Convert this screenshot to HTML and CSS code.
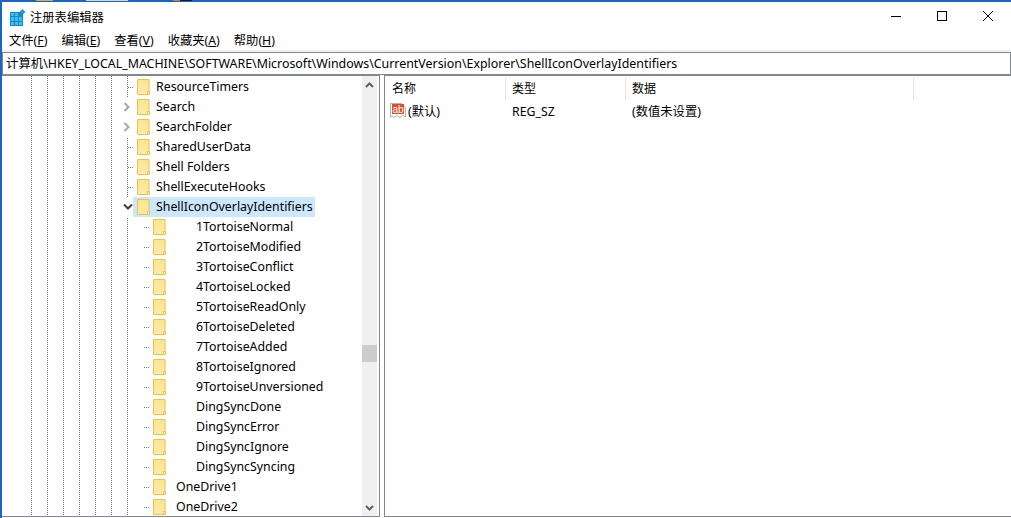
FILE: index.html
```html
<!DOCTYPE html>
<html lang="zh-CN">
<head>
<meta charset="utf-8">
<title>注册表编辑器</title>
<link rel="stylesheet" href="styles.css">
</head>
<body>
<svg class="defs" width="0" height="0" aria-hidden="true">
  <defs>
    <linearGradient id="fg" x1="0" y1="0" x2="0" y2="1">
      <stop offset="0" stop-color="#fde58f"/>
      <stop offset="1" stop-color="#fdeaa8"/>
    </linearGradient>
    <symbol id="folder" viewBox="0 0 13 16">
      <path d="M.5.5h11.500v12.500h-1.500v2.500h-10z" fill="url(#fg)" stroke="#e9c24f"/>
      <path d="M10.500 15.500v-3h2v3z" fill="#fff2c2" stroke="#e9c24f"/>
    </symbol>
    <symbol id="chev-right" viewBox="0 0 8 10">
      <path d="M1.500 1l4 4-4 4" fill="none" stroke="#a6a6a6" stroke-width="2"/>
    </symbol>
    <symbol id="chev-down" viewBox="0 0 10 8">
      <path d="M1 1.500l4 4 4-4" fill="none" stroke="#404040" stroke-width="2"/>
    </symbol>
    <symbol id="sb-up" viewBox="0 0 9 6">
      <path d="M1 5l3.500-3.500L8 5" fill="none" stroke="#606060" stroke-width="2"/>
    </symbol>
    <symbol id="sb-down" viewBox="0 0 9 6">
      <path d="M1 1l3.500 3.500L8 1" fill="none" stroke="#606060" stroke-width="2"/>
    </symbol>
  </defs>
</svg>
<div class="bleed" aria-hidden="true">
  <span class="bleed-a"></span>
  <span class="bleed-b"></span>
  <span class="bleed-c"></span>
</div>
<div class="window">
  <header class="titlebar">
    <svg class="app-icon" width="16" height="17" viewBox="0 0 16 17">
      <rect x="0" y="3" width="13" height="14" fill="#1a86cc"/>
      <g fill="#35c3f6">
        <rect x="1" y="4" width="3" height="3"/><rect x="5" y="4" width="3" height="3"/>
        <rect x="1" y="8" width="3" height="4"/><rect x="5" y="8" width="3" height="4"/><rect x="9" y="8" width="3" height="4"/>
        <rect x="1" y="13" width="3" height="3"/><rect x="5" y="13" width="3" height="3"/><rect x="9" y="13" width="3" height="3"/>
      </g>
      <path d="M12.500 0l3 3-3 3-3-3z" fill="#2a95d4"/>
    </svg>
    <span class="title">注册表编辑器</span>
    <div class="controls">
      <svg class="ctl" width="46" height="11" viewBox="0 0 46 11"><path d="M18 5.500h10" stroke="#000"/></svg>
      <svg class="ctl" width="46" height="11" viewBox="0 0 46 11"><rect x="18.500" y=".5" width="9" height="9" fill="none" stroke="#000"/></svg>
      <svg class="ctl" width="46" height="11" viewBox="0 0 46 11"><path d="M18 0l10 10M28 0L18 10" stroke="#000" fill="none"/></svg>
    </div>
  </header>
  <nav class="menubar">
    <span class="menu">文件(<u>F</u>)</span>
    <span class="menu">编辑(<u>E</u>)</span>
    <span class="menu">查看(<u>V</u>)</span>
    <span class="menu">收藏夹(<u>A</u>)</span>
    <span class="menu">帮助(<u>H</u>)</span>
  </nav>
  <div class="address">计算机\HKEY_LOCAL_MACHINE\SOFTWARE\Microsoft\Windows\CurrentVersion\Explorer\ShellIconOverlayIdentifiers</div>
  <main class="panes">
    <section class="tree-pane">
      <div class="tree">
        <div class="row"><span class="link"></span><span class="item"><svg class="folder"><use href="#folder"/></svg><span class="label">ResourceTimers</span></span></div>
        <div class="row"><span class="toggle"><svg width="8" height="10"><use href="#chev-right"/></svg></span><span class="item"><svg class="folder"><use href="#folder"/></svg><span class="label">Search</span></span></div>
        <div class="row"><span class="toggle"><svg width="8" height="10"><use href="#chev-right"/></svg></span><span class="item"><svg class="folder"><use href="#folder"/></svg><span class="label">SearchFolder</span></span></div>
        <div class="row"><span class="link"></span><span class="item"><svg class="folder"><use href="#folder"/></svg><span class="label">SharedUserData</span></span></div>
        <div class="row"><span class="link"></span><span class="item"><svg class="folder"><use href="#folder"/></svg><span class="label">Shell Folders</span></span></div>
        <div class="row"><span class="link"></span><span class="item"><svg class="folder"><use href="#folder"/></svg><span class="label">ShellExecuteHooks</span></span></div>
        <div class="row"><span class="toggle"><svg width="10" height="8"><use href="#chev-down"/></svg></span><span class="item selected"><svg class="folder"><use href="#folder"/></svg><span class="label">ShellIconOverlayIdentifiers</span></span></div>
        <div class="row child"><span class="link"></span><span class="item"><svg class="folder"><use href="#folder"/></svg><span class="label spaced">1TortoiseNormal</span></span></div>
        <div class="row child"><span class="link"></span><span class="item"><svg class="folder"><use href="#folder"/></svg><span class="label spaced">2TortoiseModified</span></span></div>
        <div class="row child"><span class="link"></span><span class="item"><svg class="folder"><use href="#folder"/></svg><span class="label spaced">3TortoiseConflict</span></span></div>
        <div class="row child"><span class="link"></span><span class="item"><svg class="folder"><use href="#folder"/></svg><span class="label spaced">4TortoiseLocked</span></span></div>
        <div class="row child"><span class="link"></span><span class="item"><svg class="folder"><use href="#folder"/></svg><span class="label spaced">5TortoiseReadOnly</span></span></div>
        <div class="row child"><span class="link"></span><span class="item"><svg class="folder"><use href="#folder"/></svg><span class="label spaced">6TortoiseDeleted</span></span></div>
        <div class="row child"><span class="link"></span><span class="item"><svg class="folder"><use href="#folder"/></svg><span class="label spaced">7TortoiseAdded</span></span></div>
        <div class="row child"><span class="link"></span><span class="item"><svg class="folder"><use href="#folder"/></svg><span class="label spaced">8TortoiseIgnored</span></span></div>
        <div class="row child"><span class="link"></span><span class="item"><svg class="folder"><use href="#folder"/></svg><span class="label spaced">9TortoiseUnversioned</span></span></div>
        <div class="row child"><span class="link"></span><span class="item"><svg class="folder"><use href="#folder"/></svg><span class="label spaced">DingSyncDone</span></span></div>
        <div class="row child"><span class="link"></span><span class="item"><svg class="folder"><use href="#folder"/></svg><span class="label spaced">DingSyncError</span></span></div>
        <div class="row child"><span class="link"></span><span class="item"><svg class="folder"><use href="#folder"/></svg><span class="label spaced">DingSyncIgnore</span></span></div>
        <div class="row child"><span class="link"></span><span class="item"><svg class="folder"><use href="#folder"/></svg><span class="label spaced">DingSyncSyncing</span></span></div>
        <div class="row child"><span class="link"></span><span class="item"><svg class="folder"><use href="#folder"/></svg><span class="label">OneDrive1</span></span></div>
        <div class="row child"><span class="link"></span><span class="item"><svg class="folder"><use href="#folder"/></svg><span class="label">OneDrive2</span></span></div>
      </div>
      <div class="scrollbar">
        <span class="sb-btn"><svg width="9" height="6"><use href="#sb-up"/></svg></span>
        <span class="sb-track"><span class="sb-thumb"></span></span>
        <span class="sb-btn"><svg width="9" height="6"><use href="#sb-down"/></svg></span>
      </div>
    </section>
    <section class="list-pane">
      <div class="list-head">
        <span class="col col-name">名称</span>
        <span class="col col-type">类型</span>
        <span class="col col-data">数据</span>
      </div>
      <div class="list-row">
        <span class="cell cell-name">
          <svg class="ab-icon" width="16" height="16" viewBox="0 0 16 16">
            <path d="M.5.5h11l4 4v9.500l-3-1.500-2.500 2-3-2-3 2-2-1.500-1.500 1z" fill="#fff" stroke="#b5b5b5"/>
            <rect x="2" y="1" width="12" height="10" fill="#d9502b"/>
            <text class="ab-text" x="8" y="9.500" text-anchor="middle">ab</text>
          </svg>
          <span>(默认)</span>
        </span>
        <span class="cell cell-type">REG_SZ</span>
        <span class="cell cell-data">(数值未设置)</span>
      </div>
    </section>
  </main>
</div>
</body>
</html>
```

FILE: styles.css
```css
* { box-sizing: border-box; }
html, body { margin: 0; height: 100%; overflow: hidden; }
body {
  background: #fff;
  color: #000;
  font-family: "Noto Sans", "Noto Sans CJK SC", sans-serif;
  font-size: 12px;
}
.defs { position: absolute; }
.bleed {
  position: absolute;
  top: 0;
  left: 36px;
  display: flex;
  height: 1px;
}
.bleed-a { width: 17px; background: #d8b23a; }
.bleed-b { width: 42px; margin-left: 33px; background: #d6d6d6; }
.bleed-c { width: 19px; margin-left: 45px; background: linear-gradient(to right, #d9822b 35%, #1a1a1a 35%); }
.window {
  display: flex;
  flex-direction: column;
  width: 1011px;
  height: 518px;
  border-top: 2px solid #1a66c4;
  border-left: 2px solid #1a66c4;
}
.titlebar {
  display: flex;
  align-items: center;
  height: 30px;
  flex: none;
  padding-left: 8px;
}
.app-icon { flex: none; margin-top: 1px; }
.title { margin-left: 4px; font-size: 12.3px; }
.controls { display: flex; margin-left: auto; }
.ctl { display: block; width: 46px; margin-bottom: 1px; }
.menubar {
  display: flex;
  align-items: center;
  height: 18px;
  flex: none;
  margin-bottom: 2px;
}
.menu { padding: 0 7px; line-height: 18px; white-space: nowrap; font-size: 12.3px; }
.address {
  flex: none;
  height: 23px;
  line-height: 21px;
  border: 1px solid #828790;
  padding-left: 3px;
  white-space: nowrap;
  overflow: hidden;
  box-shadow: 0 -2px 0 #f0f0f0;
  font-size: 12.4px;
}
.panes {
  flex: 1;
  min-height: 0;
  display: flex;
  gap: 4px;
}
.tree-pane {
  flex: none;
  width: 378px;
  height: 442px;
  display: flex;
  border-top: 1px solid #828790;
  border-bottom: 1px solid #828790;
  border-right: 1px solid #828790;
  padding-right: 2px;
}
.tree {
  flex: 1;
  min-width: 0;
  overflow: hidden;
  padding-top: 1px;
  font-size: 12.35px;
  background-image:
    linear-gradient(to bottom, #777 1px, transparent 1px),
    linear-gradient(to bottom, #777 1px, transparent 1px),
    linear-gradient(to bottom, #777 1px, transparent 1px),
    linear-gradient(to bottom, #777 1px, transparent 1px),
    linear-gradient(to bottom, #777 1px, transparent 1px),
    linear-gradient(to bottom, #777 1px, transparent 1px),
    linear-gradient(to bottom, #777 1px, transparent 1px);
  background-size: 1px 2px;
  background-repeat: repeat-y;
  background-position: 29px 0, 45px 0, 61px 0, 77px 0, 93px 0, 109px 0, 125px 0;
}
.row {
  display: flex;
  align-items: center;
  height: 20px;
  padding-left: 119px;
  white-space: nowrap;
}
.row.child { padding-left: 135px; }
.toggle {
  flex: none;
  width: 12px;
  height: 20px;
  display: flex;
  align-items: center;
  padding-left: 2px;
  background: #fff;
}
.toggle svg { display: block; }
.link {
  flex: none;
  width: 12px;
  height: 1px;
  background-image: linear-gradient(to right, transparent 7px, #777 7px);
}
.link::after {
  content: "";
  display: block;
  height: 1px;
  background: repeating-linear-gradient(to right, #fff 0 1px, transparent 1px 2px);
}
.item {
  display: flex;
  align-items: center;
  height: 20px;
  padding: 0 2px 0 4px;
}
.item.selected { background: #cce8ff; }
.folder { width: 13px; height: 16px; flex: none; display: block; }
.label { margin-left: 6px; padding-bottom: 2px; }
.row.child .label { margin-left: 10px; }
.row.child .label.spaced { margin-left: 30px; }
.scrollbar {
  flex: none;
  width: 15px;
  display: flex;
  flex-direction: column;
  background: #f0f0f0;
}
.sb-btn {
  flex: none;
  height: 17px;
  display: flex;
  align-items: center;
  justify-content: center;
}
.sb-btn svg { display: block; }
.sb-track { flex: 1; padding-top: 252px; }
.sb-thumb { display: block; height: 17px; background: #cdcdcd; }
.list-pane {
  flex: 1;
  min-width: 0;
  height: 442px;
  border-top: 1px solid #828790;
  border-bottom: 1px solid #828790;
  border-left: 1px solid #828790;
}
.list-head {
  display: flex;
  height: 24px;
  margin-top: 1px;
}
.col {
  flex: none;
  height: 23px;
  line-height: 23px;
  padding-left: 7px;
  border-right: 1px solid #e5e5e5;
}
.col-name { width: 121px; }
.col-type { width: 120px; padding-left: 6px; }
.col-data { width: 288px; padding-left: 6px; }
.list-row {
  display: flex;
  align-items: center;
  height: 20px;
}
.cell { flex: none; white-space: nowrap; font-size: 12.3px; }
.cell-name {
  width: 121px;
  display: flex;
  align-items: center;
  gap: 2px;
  padding-left: 5px;
}
.cell-type { width: 120px; padding-left: 6px; }
.cell-data { padding-left: 6px; }
.ab-icon { display: block; flex: none; }
.ab-text {
  font-family: "Liberation Sans", sans-serif;
  font-size: 10px;
  font-weight: 400;
  fill: #fff;
}
```
